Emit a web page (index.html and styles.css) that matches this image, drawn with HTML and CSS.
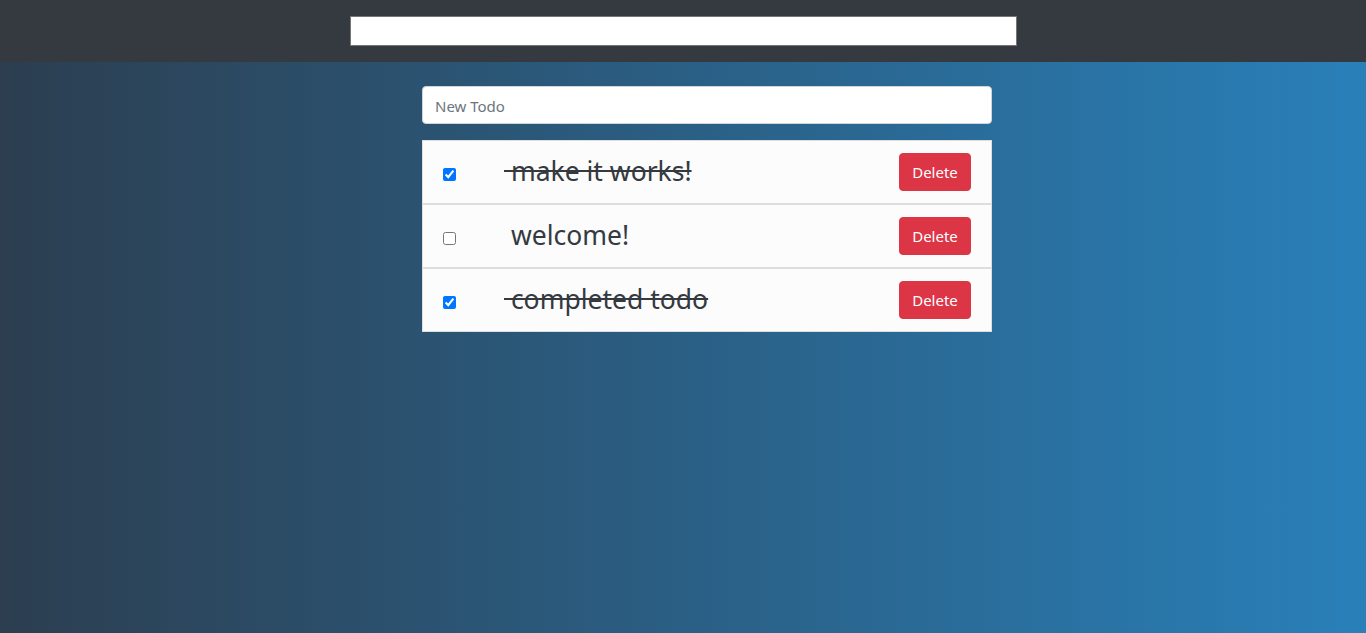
FILE: index.html
```html
<!DOCTYPE html>
<html lang="en">
<head>
<meta charset="utf-8">
<title>Todos</title>
<link rel="stylesheet" href="styles.css">
</head>
<body>
<header class="topbar">
  <input class="search" type="text">
</header>
<main class="page">
  <div class="todo-app">
    <input class="new-todo" type="text" placeholder="New Todo">
    <ul class="todo-list">
      <li class="todo-item">
        <input class="todo-check" type="checkbox" checked>
        <span class="todo-text done">&nbsp;make it works!</span>
        <button class="btn-delete">Delete</button>
      </li>
      <li class="todo-item">
        <input class="todo-check" type="checkbox">
        <span class="todo-text">&nbsp;welcome!</span>
        <button class="btn-delete">Delete</button>
      </li>
      <li class="todo-item">
        <input class="todo-check" type="checkbox" checked>
        <span class="todo-text done">&nbsp;completed todo</span>
        <button class="btn-delete">Delete</button>
      </li>
    </ul>
  </div>
</main>
</body>
</html>
```
FILE: styles.css
```css
html, body {
  margin: 0;
  padding: 0;
  height: 100%;
}
body {
  font-family: "Segoe UI", "Noto Sans", sans-serif;
  color: #343a40;
  display: flex;
  flex-direction: column;
  background: linear-gradient(to right, #2c3e50, #2980b9);
}
.topbar {
  background: #343a40;
  height: 62px;
  display: flex;
  align-items: center;
  justify-content: center;
  flex-shrink: 0;
}
.search {
  width: 667px;
  height: 30px;
  box-sizing: border-box;
  border: 1px solid #767676;
  background: #fff;
  margin: 0;
  padding: 1px 2px;
}
.page {
  flex: 1;
  padding-top: 24px;
}
.todo-app {
  width: 570px;
  margin-left: calc(50% - 261px);
  display: flex;
  flex-direction: column;
  gap: 16px;
}
.new-todo {
  height: 38px;
  box-sizing: border-box;
  border: 1px solid #ced4da;
  border-radius: 4px;
  padding: 7px 12px 5px;
  font-family: inherit;
  font-size: 15px;
  color: #495057;
  background: #fff;
  margin: 0;
}
.new-todo::placeholder {
  color: #6c757d;
}
.todo-list {
  list-style: none;
  margin: 0;
  padding: 0;
  display: flex;
  flex-direction: column;
}
.todo-item {
  display: flex;
  align-items: center;
  height: 64px;
  box-sizing: border-box;
  padding: 12px 20px;
  background: #fcfcfc;
  border: 1px solid #dedede;
}
.todo-check {
  width: 13px;
  height: 13px;
  margin: 5px 0 0 0;
  accent-color: #0075ff;
}
.todo-text {
  margin: 0 0 2px 48px;
  font-size: 26.5px;
  flex: 1;
  white-space: pre;
}
.todo-text.done {
  text-decoration: line-through;
}
.btn-delete {
  background: #dc3545;
  color: #fff;
  border: 1px solid #dc3545;
  border-radius: 4px;
  height: 38px;
  width: 72px;
  font-family: inherit;
  font-size: 15px;
  padding: 0 0 1px;
}
```
